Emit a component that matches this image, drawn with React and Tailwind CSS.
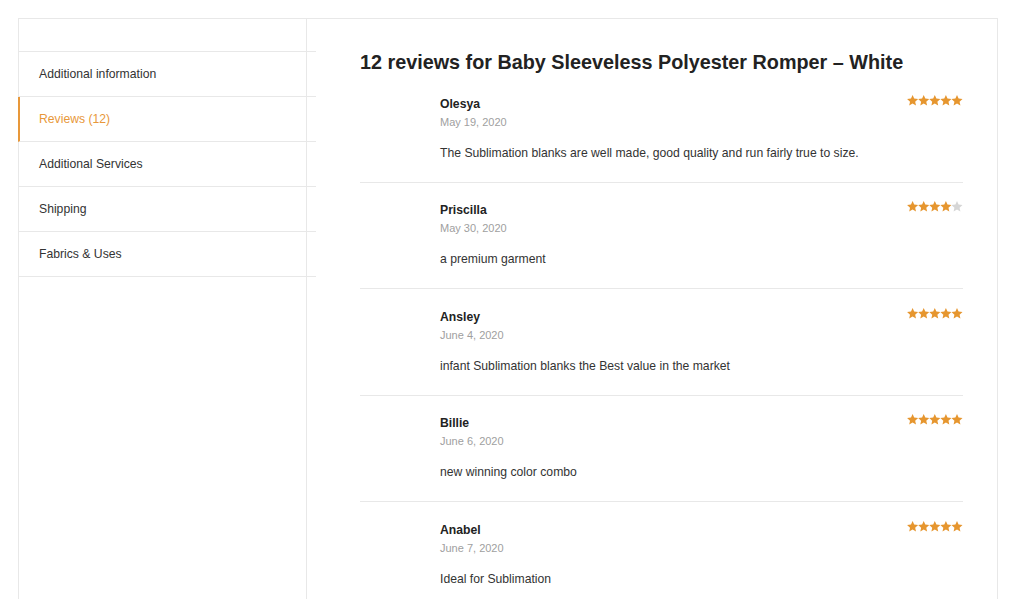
const tabs = ['Additional information', 'Reviews (12)', 'Additional Services', 'Shipping', 'Fabrics & Uses'];

const reviews = [
  { name: 'Olesya', date: 'May 19, 2020', rating: 5, text: 'The Sublimation blanks are well made, good quality and run fairly true to size.' },
  { name: 'Priscilla', date: 'May 30, 2020', rating: 4, text: 'a premium garment' },
  { name: 'Ansley', date: 'June 4, 2020', rating: 5, text: 'infant Sublimation blanks the Best value in the market' },
  { name: 'Billie', date: 'June 6, 2020', rating: 5, text: 'new winning color combo' },
  { name: 'Anabel', date: 'June 7, 2020', rating: 5, text: 'Ideal for Sublimation' },
];

function Stars({ rating }) {
  const star = 'M5.6 0L7.19 3.62 11.12 4.01 8.17 6.63 9.01 10.49 5.6 8.5 2.19 10.49 3.03 6.63 0.08 4.01 4.01 3.62Z';
  return (
    <svg width="56" height="11" viewBox="0 0 56 11">
      {[0, 1, 2, 3, 4].map((i) => (
        <path key={i} d={star} transform={`translate(${i * 11.1} 0)`} fill={i < rating ? '#e6962f' : '#d6d6d6'} />
      ))}
    </svg>
  );
}

export default function App() {
  return (
    <div className="min-h-screen bg-white font-['Liberation_Sans',Arial,sans-serif] text-[#333]">
      <div className="ml-[18px] mt-[18px] flex w-[980px] border-l border-r border-t border-[#e8e8e8]">
        <aside className="w-[288px] shrink-0 border-r border-[#e8e8e8] pt-[32px]">
          <ul className="relative ml-[-1px] w-[298px]">
            {tabs.map((tab, i) => (
              <li
                key={tab}
                className={
                  (i === 0 ? 'h-[46px] border-t ' : 'h-[45px] ') +
                  (i === 1
                    ? 'flex items-center border-b border-[#e8e8e8] border-l-2 border-l-[#e8983a] pl-[19px] text-[12.2px] text-[#e8983a]'
                    : 'flex items-center border-b border-[#e8e8e8] pl-[21px] text-[12.2px] text-[#333]')
                }
              >
                {tab}
              </li>
            ))}
          </ul>
        </aside>

        <main className="flex-1 pl-[53px] pr-[34px] pt-[29px]">
          <h2 className="text-[19.8px] font-bold leading-[28px] text-[#222]">
            12 reviews for Baby Sleeveless Polyester Romper – White
          </h2>
          <ol>
            {reviews.map((r) => (
              <li key={r.name} className="flex border-b border-[#e8e8e8] pb-[20px] pl-[80px] pt-[18.5px]">
                <div className="flex-1">
                  <p className="text-[12.2px] font-bold leading-[18px] text-[#222]">{r.name}</p>
                  <p className="text-[11px] leading-[18px] text-[#a0a0a0]">{r.date}</p>
                  <p className="mt-[13px] text-[12.2px] leading-[18px] text-[#333]">{r.text}</p>
                </div>
                <div>
                  <Stars rating={r.rating} />
                </div>
              </li>
            ))}
          </ol>
        </main>
      </div>
    </div>
  );
}
